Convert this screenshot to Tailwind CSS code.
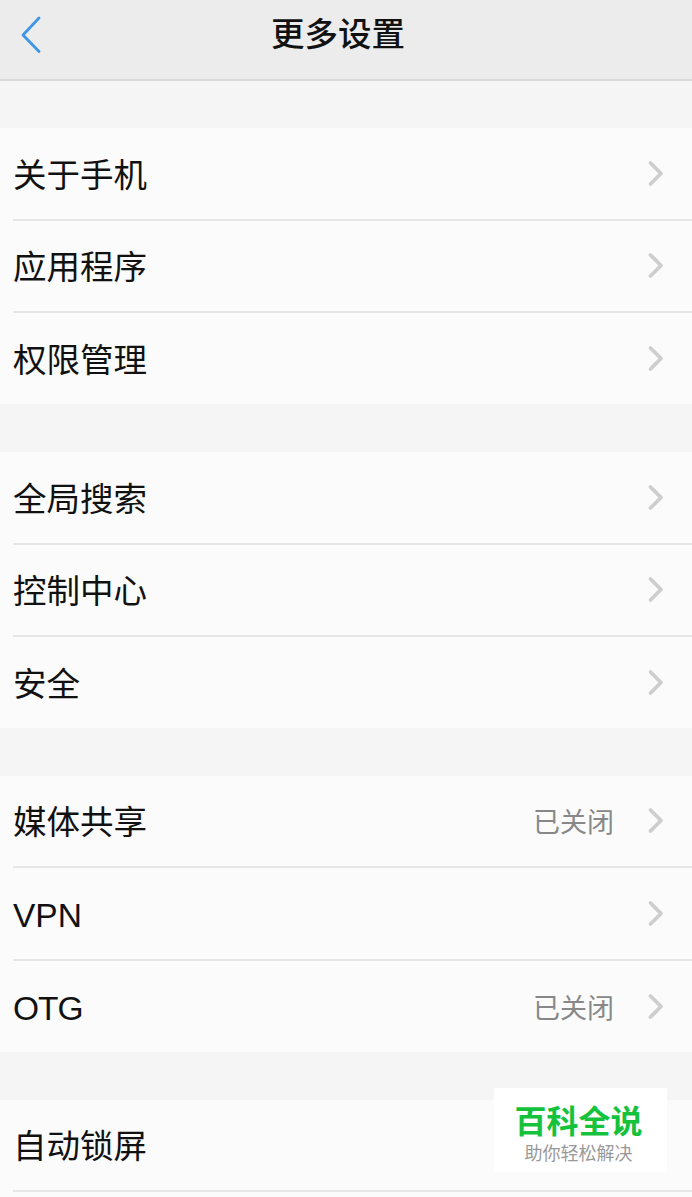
<!DOCTYPE html>
<html lang="zh-CN">
<head>
<meta charset="utf-8">
<script src="https://cdn.jsdelivr.net/npm/@tailwindcss/browser@4"></script>
</head>
<body class="m-0 p-0">
<div class="relative w-[692px] h-[1197px] overflow-hidden bg-[#f5f5f5] text-[#111111] font-['Liberation_Sans','Noto_Sans_CJK_SC',sans-serif]">
  <header class="relative flex h-[81px] items-center justify-center border-b-2 border-[#d9d9d9] bg-[#ececec]">
    <svg class="absolute left-[20px] top-[16px]" width="22" height="38" viewBox="0 0 22 38" fill="none"><path d="M19 2 L3 19 L19 35.5" stroke="#3f96e6" stroke-width="2.8" stroke-linecap="round" stroke-linejoin="round"/></svg>
    <h1 class="mb-[9px] mr-[16px] text-[33.5px] leading-[46px] font-medium text-[#111111]">更多设置</h1>
  </header>

  <section class="mt-[47px] bg-[#fbfbfb]">
    <div class="flex h-[93px] items-center justify-between ml-[13px] border-b-2 border-[#e6e6e6]"><span class="pt-[5px] text-[33.5px]">关于手机</span><svg class="mr-[27px]" width="18" height="28" viewBox="0 0 18 28" fill="none"><path d="M3.5 3 L14 13.5 L3.5 24" stroke="#cecece" stroke-width="3.8" stroke-linecap="round" stroke-linejoin="round"/></svg></div>
    <div class="flex h-[92px] items-center justify-between ml-[13px] border-b-2 border-[#e6e6e6]"><span class="pt-[5px] text-[33.5px]">应用程序</span><svg class="mr-[27px]" width="18" height="28" viewBox="0 0 18 28" fill="none"><path d="M3.5 3 L14 13.5 L3.5 24" stroke="#cecece" stroke-width="3.8" stroke-linecap="round" stroke-linejoin="round"/></svg></div>
    <div class="flex h-[91px] items-center justify-between ml-[13px]"><span class="pt-[5px] text-[33.5px]">权限管理</span><svg class="mr-[27px]" width="18" height="28" viewBox="0 0 18 28" fill="none"><path d="M3.5 3 L14 13.5 L3.5 24" stroke="#cecece" stroke-width="3.8" stroke-linecap="round" stroke-linejoin="round"/></svg></div>
  </section>

  <section class="mt-[48px] bg-[#fbfbfb]">
    <div class="flex h-[93px] items-center justify-between ml-[13px] border-b-2 border-[#e6e6e6]"><span class="pt-[5px] text-[33.5px]">全局搜索</span><svg class="mr-[27px]" width="18" height="28" viewBox="0 0 18 28" fill="none"><path d="M3.5 3 L14 13.5 L3.5 24" stroke="#cecece" stroke-width="3.8" stroke-linecap="round" stroke-linejoin="round"/></svg></div>
    <div class="flex h-[92px] items-center justify-between ml-[13px] border-b-2 border-[#e6e6e6]"><span class="pt-[5px] text-[33.5px]">控制中心</span><svg class="mr-[27px]" width="18" height="28" viewBox="0 0 18 28" fill="none"><path d="M3.5 3 L14 13.5 L3.5 24" stroke="#cecece" stroke-width="3.8" stroke-linecap="round" stroke-linejoin="round"/></svg></div>
    <div class="flex h-[91px] items-center justify-between ml-[13px]"><span class="pt-[5px] text-[33.5px]">安全</span><svg class="mr-[27px]" width="18" height="28" viewBox="0 0 18 28" fill="none"><path d="M3.5 3 L14 13.5 L3.5 24" stroke="#cecece" stroke-width="3.8" stroke-linecap="round" stroke-linejoin="round"/></svg></div>
  </section>

  <section class="mt-[48px] bg-[#fbfbfb]">
    <div class="flex h-[92px] items-center ml-[13px] border-b-2 border-[#e6e6e6]"><span class="flex-1 pt-[5px] text-[33.5px]">媒体共享</span><span class="mr-[33px] pt-[5px] text-[27px] text-[#888888]">已关闭</span><svg class="mr-[27px]" width="18" height="28" viewBox="0 0 18 28" fill="none"><path d="M3.5 3 L14 13.5 L3.5 24" stroke="#cecece" stroke-width="3.8" stroke-linecap="round" stroke-linejoin="round"/></svg></div>
    <div class="flex h-[93px] items-center justify-between ml-[13px] border-b-2 border-[#e6e6e6]"><span class="pt-[5px] text-[33.5px]">VPN</span><svg class="mr-[27px]" width="18" height="28" viewBox="0 0 18 28" fill="none"><path d="M3.5 3 L14 13.5 L3.5 24" stroke="#cecece" stroke-width="3.8" stroke-linecap="round" stroke-linejoin="round"/></svg></div>
    <div class="flex h-[91px] items-center ml-[13px]"><span class="flex-1 pt-[5px] text-[33.5px] tracking-[-1px]">OTG</span><span class="mr-[33px] pt-[5px] text-[27px] text-[#888888]">已关闭</span><svg class="mr-[27px]" width="18" height="28" viewBox="0 0 18 28" fill="none"><path d="M3.5 3 L14 13.5 L3.5 24" stroke="#cecece" stroke-width="3.8" stroke-linecap="round" stroke-linejoin="round"/></svg></div>
  </section>

  <section class="mt-[48px] bg-[#fbfbfb]">
    <div class="flex h-[92px] items-center ml-[13px] border-b-2 border-[#e6e6e6]"><span class="pt-[5px] text-[33.5px]">自动锁屏</span></div>
    <div class="h-[10px]"></div>
  </section>

  <div class="absolute left-[494px] top-[1088px] flex h-[84px] w-[173px] flex-col items-center bg-white pr-[4px] pt-[15px]">
    <span class="text-[32px] leading-[39px] font-semibold text-[#14c23c]">百科全说</span>
    <span class="text-[18px] leading-[24px] text-[#999999]">助你轻松解决</span>
  </div>
</div>
</body>
</html>
